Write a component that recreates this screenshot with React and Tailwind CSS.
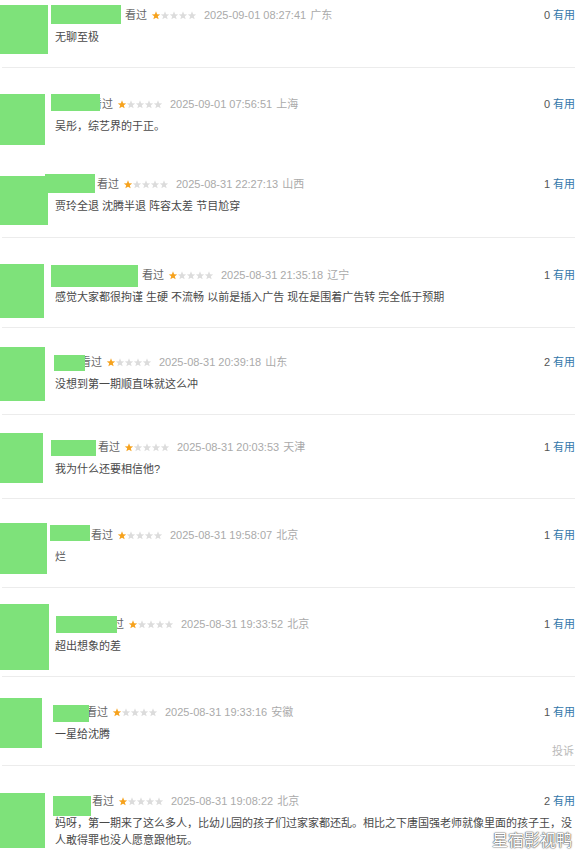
import React from "react";

const rows = [
  { box: "h-[68px] pt-[7px]", kx: "pl-[125px]", date: "2025-09-01 08:27:41", loc: "广东", useful: 0, text: "无聊至极", border: true,
    av: "top-[5px] w-[48px] h-[49px]", nm: "left-[51px] top-[5px] w-[70px] h-[19px]" },
  { box: "h-[89px] pt-[28px]", kx: "pl-[91px]", date: "2025-09-01 07:56:51", loc: "上海", useful: 0, text: "吴彤，综艺界的于正。", border: false,
    av: "top-[26px] w-[45px] h-[51px]", nm: "left-[51px] top-[26px] w-[49px] h-[17px]" },
  { box: "h-[81px] pt-[19px]", kx: "pl-[97px]", date: "2025-08-31 22:27:13", loc: "山西", useful: 1, text: "贾玲全退 沈腾半退 阵容太差 节目尬穿", border: true,
    av: "top-[19px] w-[48px] h-[49px]", nm: "left-[45px] top-[17px] w-[50px] h-[19px]" },
  { box: "h-[90px] pt-[29px]", kx: "pl-[142px]", date: "2025-08-31 21:35:18", loc: "辽宁", useful: 1, text: "感觉大家都很拘谨 生硬 不流畅 以前是插入广告 现在是围着广告转 完全低于预期", border: true,
    av: "top-[26px] w-[44px] h-[54px]", nm: "left-[51px] top-[27px] w-[87px] h-[22px]" },
  { box: "h-[87px] pt-[26px]", kx: "pl-[80px]", date: "2025-08-31 20:39:18", loc: "山东", useful: 2, text: "没想到第一期顺直味就这么冲", border: true,
    av: "top-[19px] w-[45px] h-[54px]", nm: "left-[54px] top-[27px] w-[31px] h-[16px]" },
  { box: "h-[84px] pt-[24px]", kx: "pl-[98px]", date: "2025-08-31 20:03:53", loc: "天津", useful: 1, text: "我为什么还要相信他?", border: true,
    av: "top-[18px] w-[43px] h-[50px]", nm: "left-[51px] top-[25px] w-[45px] h-[16px]" },
  { box: "h-[89px] pt-[28px]", kx: "pl-[91px]", date: "2025-08-31 19:58:07", loc: "北京", useful: 1, text: "烂", border: true,
    av: "top-[24px] w-[47px] h-[51px]", nm: "left-[50px] top-[26px] w-[40px] h-[16px]" },
  { box: "h-[89px] pt-[28px]", kx: "pl-[102px]", date: "2025-08-31 19:33:52", loc: "北京", useful: 1, text: "超出想象的差", border: true,
    av: "top-[16px] w-[49px] h-[66px]", nm: "left-[56px] top-[28px] w-[61px] h-[17px]" },
  { box: "h-[89px] pt-[27px]", kx: "pl-[86px]", date: "2025-08-31 19:33:16", loc: "安徽", useful: 1, text: "一星给沈腾", border: true, report: true,
    av: "top-[21px] w-[42px] h-[50px]", nm: "left-[53px] top-[28px] w-[36px] h-[17px]" },
  { box: "h-[92px] pt-[27px]", kx: "pl-[92px]", date: "2025-08-31 19:08:22", loc: "北京", useful: 2,
    text: "妈呀，第一期来了这么多人，比幼儿园的孩子们过家家都还乱。相比之下唐国强老师就像里面的孩子王，没人敢得罪也没人愿意跟他玩。", border: false,
    av: "top-[27px] w-[45px] h-[55px]", nm: "left-[53px] top-[30px] w-[38px] h-[20px]" },
];

const STAR = "5,0.4 6.25,3.6 9.7,3.75 7,5.9 7.95,9.3 5,7.4 2.05,9.3 3,5.9 0.3,3.75 3.75,3.6";

function Stars() {
  return (
    <svg width="46" height="9" viewBox="0 0 50 10" className="shrink-0">
      {[0, 1, 2, 3, 4].map((i) => (
        <polygon key={i} points={STAR} transform={`translate(${i * 10} 0)`} fill={i === 0 ? "#f6a21d" : "#dcdcdc"} />
      ))}
    </svg>
  );
}

function Row({ r }) {
  return (
    <div className={"relative flex flex-col " + r.box}>
      <div className="flex h-[16px] items-center justify-between text-[11px] leading-[16px]">
        <div className={"flex items-center " + r.kx}>
          <span className="text-[#666]">看过</span>
          <span className="ml-[4px] flex items-center"><Stars /></span>
          <span className="ml-[7px] text-[#aaa]">{r.date}</span>
          <span className="ml-[4px] text-[#aaa]">{r.loc}</span>
        </div>
        <div className="pr-[4px]">
          <span className="text-[#555]">{r.useful}</span>
          <span className="ml-[3px] text-[#3377aa]">有用</span>
        </div>
      </div>
      <div className="mt-[6px] pl-[55px] pr-[3px] text-[11px] leading-[17px] text-[#494949]">{r.text}</div>
      {r.report && <div className="pr-[5px] text-right text-[11px] leading-[16px] text-[#bbb]">投诉</div>}
      {r.border && <div className="mt-auto mx-[2px] mr-[4px] h-px bg-[#ececec]" />}
      <div className={"absolute left-0 bg-[#7ee27a] " + r.av} />
      <div className={"absolute bg-[#7ee27a] " + r.nm} />
    </div>
  );
}

export default function App() {
  return (
    <div className="relative h-[858px] w-[579px] overflow-hidden bg-white font-['Liberation_Sans','Noto_Sans_CJK_SC',sans-serif]">
      {rows.map((r, i) => (
        <Row key={i} r={r} />
      ))}
      <div className="absolute left-[492px] top-[832px] text-[16px] leading-[18px] text-white [text-shadow:0_0_1px_#555,0_0_1px_#555,0_0_2px_#777]">
        星宿影视鸭
      </div>
    </div>
  );
}
